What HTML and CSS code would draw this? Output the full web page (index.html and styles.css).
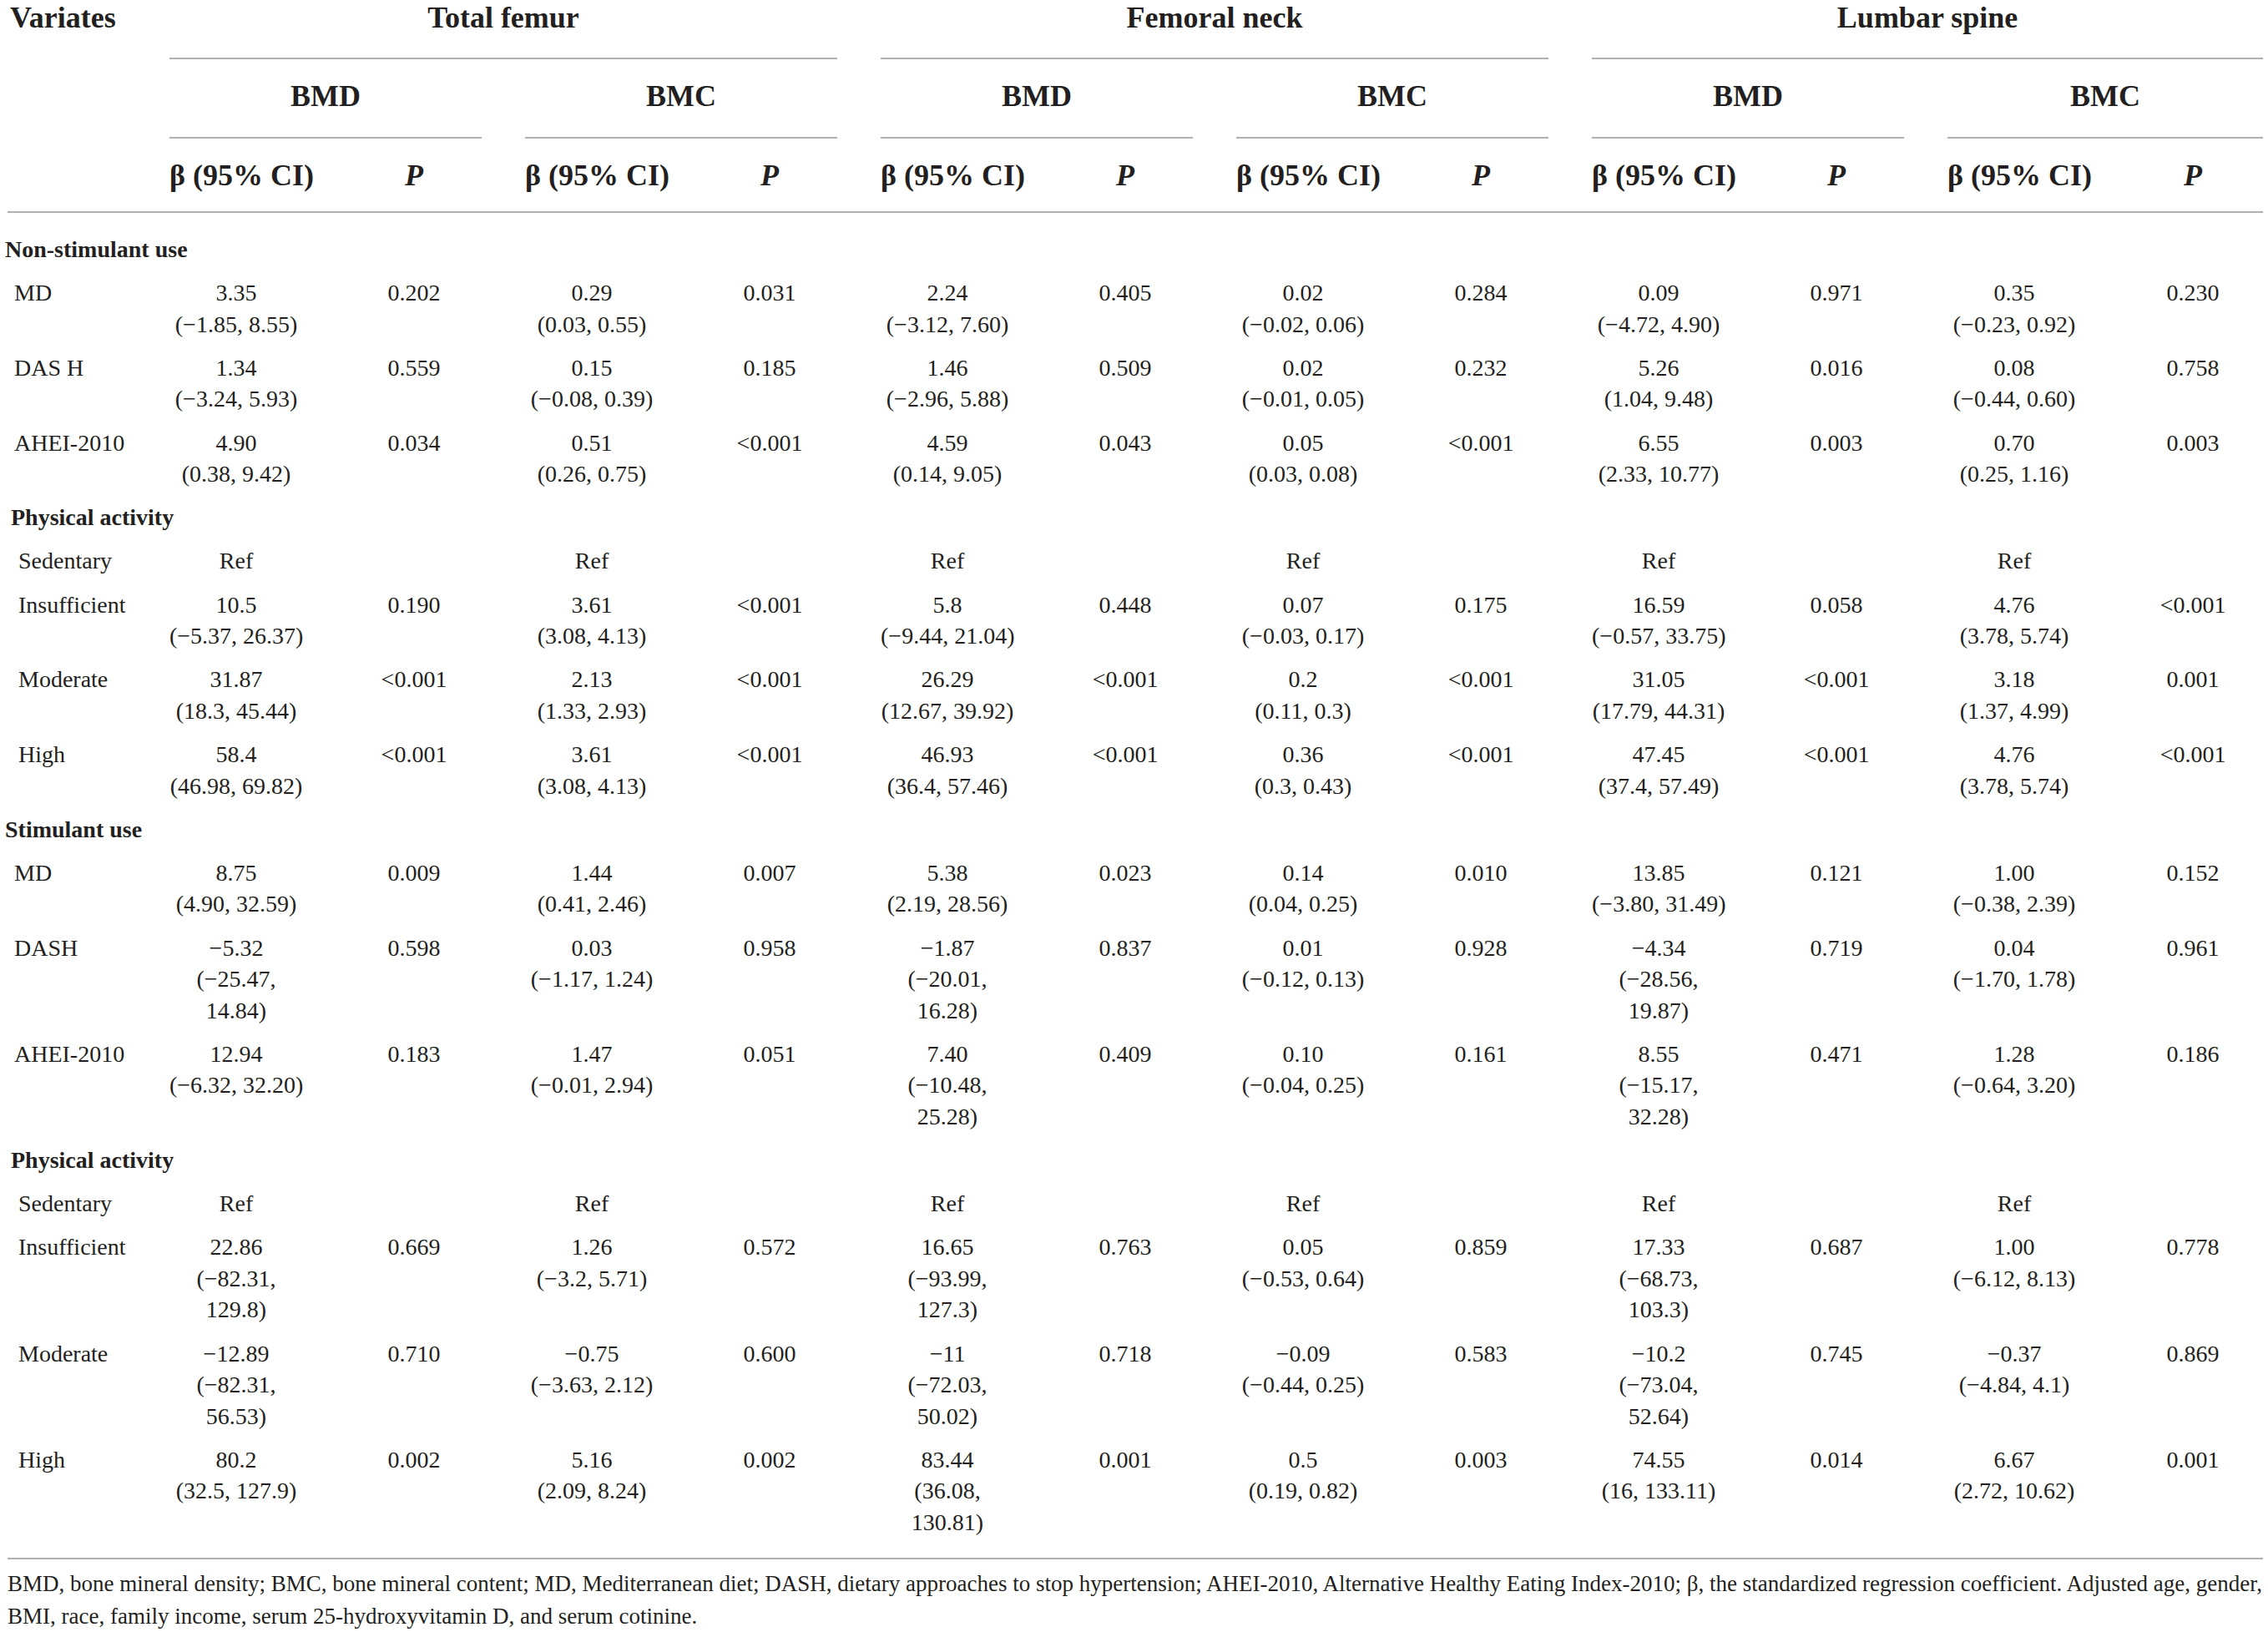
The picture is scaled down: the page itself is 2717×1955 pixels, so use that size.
FILE: index.html
```html
<!DOCTYPE html>
<html lang="en">
<head>
<meta charset="utf-8">
<title>Regression table</title>
<link rel="stylesheet" href="styles.css">
</head>
<body>
<div class="page">
<table class="results">
  <colgroup>
    <col class="c-var">
    <col class="c-b"><col class="c-p">
    <col class="c-b"><col class="c-p">
    <col class="c-b"><col class="c-p">
    <col class="c-b"><col class="c-p">
    <col class="c-b"><col class="c-p">
    <col class="c-b"><col class="c-p-last">
  </colgroup>
  <thead>
    <tr class="h-top">
      <th rowspan="3" class="h-var">Variates</th>
      <th colspan="4"><div class="grp">Total femur</div></th>
      <th colspan="4"><div class="grp">Femoral neck</div></th>
      <th colspan="4"><div class="grp last">Lumbar spine</div></th>
    </tr>
    <tr class="h-mid">
      <th colspan="2"><div class="sub">BMD</div></th>
      <th colspan="2"><div class="sub">BMC</div></th>
      <th colspan="2"><div class="sub">BMD</div></th>
      <th colspan="2"><div class="sub">BMC</div></th>
      <th colspan="2"><div class="sub">BMD</div></th>
      <th colspan="2"><div class="sub last">BMC</div></th>
    </tr>
    <tr class="h-col">
      <th>β (95% CI)</th><th><i>P</i></th>
      <th>β (95% CI)</th><th><i>P</i></th>
      <th>β (95% CI)</th><th><i>P</i></th>
      <th>β (95% CI)</th><th><i>P</i></th>
      <th>β (95% CI)</th><th><i>P</i></th>
      <th>β (95% CI)</th><th class="p-last"><i>P</i></th>
    </tr>
  </thead>
  <tbody>
    <tr class="first"><td class="lab sec" colspan="13">Non-stimulant use</td></tr>
    <tr>
      <td class="lab diet">MD</td>
      <td>3.35<br>(−1.85, 8.55)</td><td>0.202</td>
      <td>0.29<br>(0.03, 0.55)</td><td>0.031</td>
      <td>2.24<br>(−3.12, 7.60)</td><td>0.405</td>
      <td>0.02<br>(−0.02, 0.06)</td><td>0.284</td>
      <td>0.09<br>(−4.72, 4.90)</td><td>0.971</td>
      <td>0.35<br>(−0.23, 0.92)</td><td class="p-last">0.230</td>
    </tr>
    <tr>
      <td class="lab diet">DAS H</td>
      <td>1.34<br>(−3.24, 5.93)</td><td>0.559</td>
      <td>0.15<br>(−0.08, 0.39)</td><td>0.185</td>
      <td>1.46<br>(−2.96, 5.88)</td><td>0.509</td>
      <td>0.02<br>(−0.01, 0.05)</td><td>0.232</td>
      <td>5.26<br>(1.04, 9.48)</td><td>0.016</td>
      <td>0.08<br>(−0.44, 0.60)</td><td class="p-last">0.758</td>
    </tr>
    <tr>
      <td class="lab diet">AHEI-2010</td>
      <td>4.90<br>(0.38, 9.42)</td><td>0.034</td>
      <td>0.51<br>(0.26, 0.75)</td><td>&lt;0.001</td>
      <td>4.59<br>(0.14, 9.05)</td><td>0.043</td>
      <td>0.05<br>(0.03, 0.08)</td><td>&lt;0.001</td>
      <td>6.55<br>(2.33, 10.77)</td><td>0.003</td>
      <td>0.70<br>(0.25, 1.16)</td><td class="p-last">0.003</td>
    </tr>
    <tr><td class="lab pa" colspan="13">Physical activity</td></tr>
    <tr>
      <td class="lab lvl">Sedentary</td>
      <td>Ref</td><td></td>
      <td>Ref</td><td></td>
      <td>Ref</td><td></td>
      <td>Ref</td><td></td>
      <td>Ref</td><td></td>
      <td>Ref</td><td class="p-last"></td>
    </tr>
    <tr>
      <td class="lab lvl">Insufficient</td>
      <td>10.5<br>(−5.37, 26.37)</td><td>0.190</td>
      <td>3.61<br>(3.08, 4.13)</td><td>&lt;0.001</td>
      <td>5.8<br>(−9.44, 21.04)</td><td>0.448</td>
      <td>0.07<br>(−0.03, 0.17)</td><td>0.175</td>
      <td>16.59<br>(−0.57, 33.75)</td><td>0.058</td>
      <td>4.76<br>(3.78, 5.74)</td><td class="p-last">&lt;0.001</td>
    </tr>
    <tr>
      <td class="lab lvl">Moderate</td>
      <td>31.87<br>(18.3, 45.44)</td><td>&lt;0.001</td>
      <td>2.13<br>(1.33, 2.93)</td><td>&lt;0.001</td>
      <td>26.29<br>(12.67, 39.92)</td><td>&lt;0.001</td>
      <td>0.2<br>(0.11, 0.3)</td><td>&lt;0.001</td>
      <td>31.05<br>(17.79, 44.31)</td><td>&lt;0.001</td>
      <td>3.18<br>(1.37, 4.99)</td><td class="p-last">0.001</td>
    </tr>
    <tr>
      <td class="lab lvl">High</td>
      <td>58.4<br>(46.98, 69.82)</td><td>&lt;0.001</td>
      <td>3.61<br>(3.08, 4.13)</td><td>&lt;0.001</td>
      <td>46.93<br>(36.4, 57.46)</td><td>&lt;0.001</td>
      <td>0.36<br>(0.3, 0.43)</td><td>&lt;0.001</td>
      <td>47.45<br>(37.4, 57.49)</td><td>&lt;0.001</td>
      <td>4.76<br>(3.78, 5.74)</td><td class="p-last">&lt;0.001</td>
    </tr>
    <tr><td class="lab sec" colspan="13">Stimulant use</td></tr>
    <tr>
      <td class="lab diet">MD</td>
      <td>8.75<br>(4.90, 32.59)</td><td>0.009</td>
      <td>1.44<br>(0.41, 2.46)</td><td>0.007</td>
      <td>5.38<br>(2.19, 28.56)</td><td>0.023</td>
      <td>0.14<br>(0.04, 0.25)</td><td>0.010</td>
      <td>13.85<br>(−3.80, 31.49)</td><td>0.121</td>
      <td>1.00<br>(−0.38, 2.39)</td><td class="p-last">0.152</td>
    </tr>
    <tr>
      <td class="lab diet">DASH</td>
      <td>−5.32<br>(−25.47,<br>14.84)</td><td>0.598</td>
      <td>0.03<br>(−1.17, 1.24)</td><td>0.958</td>
      <td>−1.87<br>(−20.01,<br>16.28)</td><td>0.837</td>
      <td>0.01<br>(−0.12, 0.13)</td><td>0.928</td>
      <td>−4.34<br>(−28.56,<br>19.87)</td><td>0.719</td>
      <td>0.04<br>(−1.70, 1.78)</td><td class="p-last">0.961</td>
    </tr>
    <tr>
      <td class="lab diet">AHEI-2010</td>
      <td>12.94<br>(−6.32, 32.20)</td><td>0.183</td>
      <td>1.47<br>(−0.01, 2.94)</td><td>0.051</td>
      <td>7.40<br>(−10.48,<br>25.28)</td><td>0.409</td>
      <td>0.10<br>(−0.04, 0.25)</td><td>0.161</td>
      <td>8.55<br>(−15.17,<br>32.28)</td><td>0.471</td>
      <td>1.28<br>(−0.64, 3.20)</td><td class="p-last">0.186</td>
    </tr>
    <tr><td class="lab pa" colspan="13">Physical activity</td></tr>
    <tr>
      <td class="lab lvl">Sedentary</td>
      <td>Ref</td><td></td>
      <td>Ref</td><td></td>
      <td>Ref</td><td></td>
      <td>Ref</td><td></td>
      <td>Ref</td><td></td>
      <td>Ref</td><td class="p-last"></td>
    </tr>
    <tr>
      <td class="lab lvl">Insufficient</td>
      <td>22.86<br>(−82.31,<br>129.8)</td><td>0.669</td>
      <td>1.26<br>(−3.2, 5.71)</td><td>0.572</td>
      <td>16.65<br>(−93.99,<br>127.3)</td><td>0.763</td>
      <td>0.05<br>(−0.53, 0.64)</td><td>0.859</td>
      <td>17.33<br>(−68.73,<br>103.3)</td><td>0.687</td>
      <td>1.00<br>(−6.12, 8.13)</td><td class="p-last">0.778</td>
    </tr>
    <tr>
      <td class="lab lvl">Moderate</td>
      <td>−12.89<br>(−82.31,<br>56.53)</td><td>0.710</td>
      <td>−0.75<br>(−3.63, 2.12)</td><td>0.600</td>
      <td>−11<br>(−72.03,<br>50.02)</td><td>0.718</td>
      <td>−0.09<br>(−0.44, 0.25)</td><td>0.583</td>
      <td>−10.2<br>(−73.04,<br>52.64)</td><td>0.745</td>
      <td>−0.37<br>(−4.84, 4.1)</td><td class="p-last">0.869</td>
    </tr>
    <tr class="last-row">
      <td class="lab lvl">High</td>
      <td>80.2<br>(32.5, 127.9)</td><td>0.002</td>
      <td>5.16<br>(2.09, 8.24)</td><td>0.002</td>
      <td>83.44<br>(36.08,<br>130.81)</td><td>0.001</td>
      <td>0.5<br>(0.19, 0.82)</td><td>0.003</td>
      <td>74.55<br>(16, 133.11)</td><td>0.014</td>
      <td>6.67<br>(2.72, 10.62)</td><td class="p-last">0.001</td>
    </tr>
  </tbody>
</table>
<p class="note">BMD, bone mineral density; BMC, bone mineral content; MD, Mediterranean diet; DASH, dietary approaches to stop hypertension; AHEI-2010, Alternative Healthy Eating Index-2010; β, the standardized regression coefficient. Adjusted age, gender,<br>BMI, race, family income, serum 25-hydroxyvitamin D, and serum cotinine.</p>
</div>
</body>
</html>
```

FILE: styles.css
```css
html, body {
  margin: 0;
  padding: 0;
  background: #ffffff;
}

body {
  color: #231f20;
  font-family: "Liberation Serif", "Times New Roman", serif;
}

.page {
  padding: 0 6px 0 9px;
}

.results {
  width: 2702px;
  table-layout: fixed;
  border-collapse: separate;
  border-spacing: 0;
}

.c-var { width: 194px; }
.c-b { width: 160px; }
.c-p { width: 266px; }
.c-p-last { width: 218px; }

.results th {
  font-size: 36px;
  line-height: 40px;
  font-weight: bold;
  text-align: center;
  vertical-align: top;
  padding: 0;
  white-space: nowrap;
}

.results th.h-var {
  text-align: left;
  padding: 1px 0 0 3px;
  border-bottom: 2px solid #b0b0b0;
}

.grp {
  padding: 1px 0 28px;
  margin-right: 52px;
  border-bottom: 2px solid #b0b0b0;
}

.sub {
  padding: 24px 0 29px;
  margin-right: 52px;
  border-bottom: 2px solid #b0b0b0;
}

.grp.last,
.sub.last {
  margin-right: 0;
}

.h-col th {
  padding: 24px 0 23px;
  border-bottom: 2px solid #b0b0b0;
}

.results th.p-last,
.results td.p-last {
  padding-left: 50px;
}

.results td {
  font-size: 28px;
  line-height: 37.5px;
  padding: 7.35px 0;
  text-align: center;
  vertical-align: top;
  white-space: nowrap;
}

.results td.lab {
  text-align: left;
}

.results td.sec {
  font-weight: bold;
  text-indent: -3px;
}

.results td.pa {
  font-weight: bold;
  padding-left: 4px;
}

.results td.diet {
  padding-left: 8px;
}

.results td.lvl {
  padding-left: 13px;
}

.results tr.first td {
  padding-top: 25px;
}

.results tr.last-row td {
  padding-bottom: 24px;
  border-bottom: 2px solid #b0b0b0;
}

.note {
  margin: 10px 0 0;
  font-size: 27px;
  line-height: 39px;
  white-space: nowrap;
}
```
